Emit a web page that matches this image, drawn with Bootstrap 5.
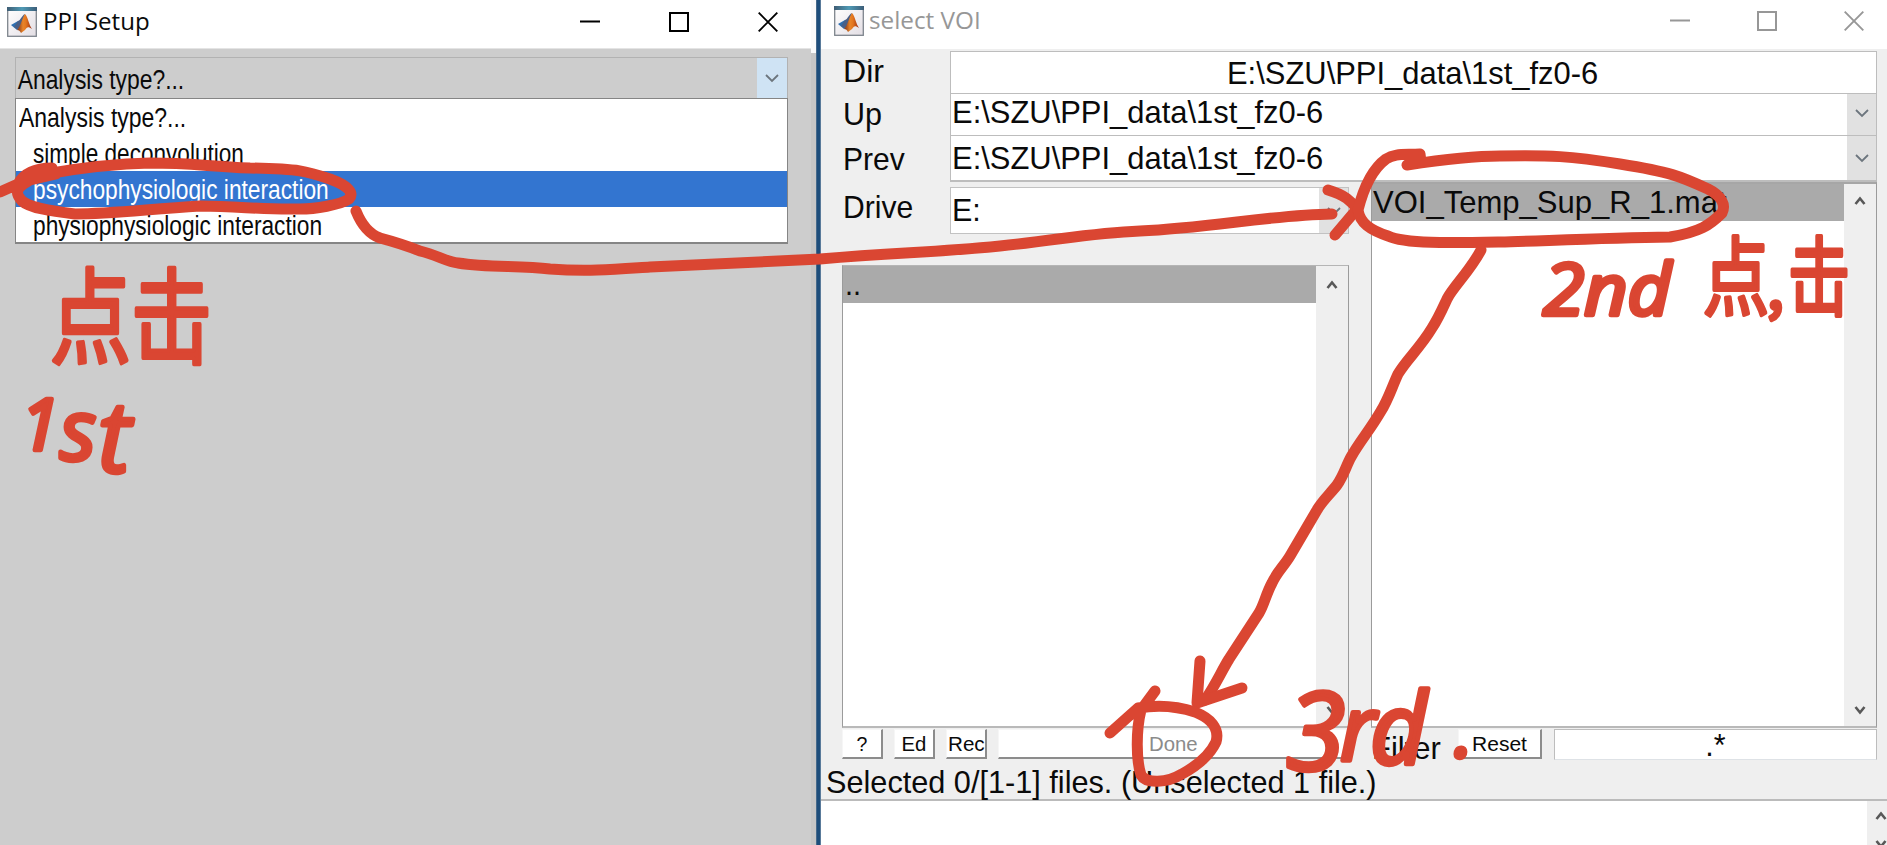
<!DOCTYPE html>
<html lang="en">
<head>
<meta charset="utf-8">
<title>PPI Setup</title>
<link href="https://cdn.jsdelivr.net/npm/bootstrap@5.3.0/dist/css/bootstrap.min.css" rel="stylesheet">
<style>
  body { width: 1887px; height: 845px; overflow: hidden; background: #cdcdcd; color: #0a0a0a; font-family: "Liberation Sans", Arial, sans-serif; }
  .fit { display: inline-block; transform-origin: 0 50%; white-space: pre; }
  .titlebar { height: 49px; background: #fff; font-family: "Open Sans", "Noto Sans", sans-serif; font-size: 24.5px; }
  .titlebar .fit { line-height: 41px; }
  .win-a { width: 811px; background: #cdcdcd; }
  .win-a .titlebar { border-bottom: 1px solid #e4e4e4; }
  .gutter { width: 5px; background: #c6c6c6; border-top: 53px solid #fafafa; }
  .frame-edge { width: 5px; background: linear-gradient(90deg, #5b7893, #1d4d7b 30%, #1d4d7b 70%, #7891aa); }
  .win-b { width: 1066px; background: #efefef; }
  .win-b .titlebar { color: #979797; }
  .ppi { margin: 8px 0 0 15px; width: 773px; font-size: 27.5px; }
  .ppi-combo { height: 41px; border: 1px solid #b2b2b2; border-bottom: 0; line-height: 43px; }
  .ppi-btn { width: 30px; background: #cfe3f4; }
  .ppi-menu { height: 146px; background: #fff; border: 1px solid #858585; border-width: 1.5px 1px 2px; }
  .ppi-item { height: 36px; line-height: 37px; padding-left: 17px; }
  .ppi-item.first { padding-left: 3px; }
  .ppi-item.on { background: #3375d0; color: #fff; }
  .big { font-size: 30.5px; }
  .lab { width: 129px; padding-left: 22px; }
  .fieldbox { background: #fff; border: 1px solid #bdbdbd; border-bottom: 0; }
  .r1 { height: 42px; line-height: 42px; margin-top: 2px; }
  .r2 { height: 42px; line-height: 37px; }
  .r3 { height: 47px; line-height: 44px; }
  .r3 .fieldbox { border-bottom: 2px solid #bdbdbd; }
  .r4 { height: 47px; line-height: 45px; margin-top: 5px; }
  .r4 .fieldbox { width: 399px; border: 1.5px solid #c2c2c2; }
  .dd { width: 29px; background: #e1e1e1; }
  .col-l { width: 528px; }
  .listbox { background: #fff; border: 1.5px solid #9b9b9b; border-top-color: #b5b5b5; border-bottom: 2px solid #b9b9b9; }
  .list-l { width: 507px; height: 463px; margin: 31px 0 0 21px; }
  .list-r { width: 506px; height: 546px; margin-left: 22px; border-top: 2px solid #a6a6a6; }
  .pick { height: 37px; background: #aaa; line-height: 37px; }
  .sb { width: 32px; background: #efefef; padding: 13px 0 10px; }
  .pb { height: 30px; background: #fff; border: 1px solid #f6f6f6; border-right: 2px solid #8c8c8c; border-bottom: 2px solid #8c8c8c; font-size: 19.5px; line-height: 29px; text-align: center; }
  .pb .fit { transform-origin: 50% 50%; }
  .btns { height: 32px; padding-top: 1px; }
  .status { height: 39px; line-height: 45px; padding-left: 5px; }
  .msgs { height: 46px; background: #fff; border-top: 2px solid #bbb; }
  .msgs .sb { width: 20px; padding: 9px 0 0 8px; overflow: hidden; }
  .ink { left: 0; top: 0; pointer-events: none; }
  .ink g { fill: none; stroke: #da4632; stroke-width: 11; stroke-linecap: round; stroke-linejoin: round; }
  .ink text { fill: #da4632; stroke: #da4632; stroke-width: 4; stroke-linejoin: round; font-family: "Noto Sans CJK SC", sans-serif; }
  .ink .lat { font-family: "Open Sans", "Liberation Sans", sans-serif; font-style: italic; stroke-width: 4.5; }
</style>
</head>
<body class="position-relative">
<svg width="0" height="0" class="position-absolute">
  <defs>
    <linearGradient id="sky" x1="0" x2="1"><stop offset="0" stop-color="#3f5d74"/><stop offset=".5" stop-color="#4f9ab5"/><stop offset="1" stop-color="#3c5d78"/></linearGradient>
    <linearGradient id="face" x1="0" y1="0" x2="1" y2="1"><stop offset="0" stop-color="#fff"/><stop offset="1" stop-color="#e3dee4"/></linearGradient>
    <linearGradient id="peak" x1="0" x2="1"><stop offset="0" stop-color="#7a2d17"/><stop offset=".4" stop-color="#e8852a"/><stop offset=".6" stop-color="#e3761f"/><stop offset="1" stop-color="#9c2c12"/></linearGradient>
    <symbol id="matlab" viewBox="0 0 30 30">
      <rect x=".7" y=".7" width="28.6" height="28.6" fill="url(#face)" stroke="#7e858d" stroke-width="1.3"/>
      <rect x="0" y="0" width="30" height="4" fill="url(#sky)"/>
      <path d="M4 18l7-4 5 3-6 6z" fill="#2f6fb0"/>
      <path d="M11 14c3-1 4-6 7-7l-4 13-4 2-3-2z" fill="#4a5f86"/>
      <path d="M18 7c3 3 4 11 7 15-4-3-5-2-7 1l-4 3c-1-2-2-3-4-3 4-4 5-12 8-16z" fill="url(#peak)"/>
    </symbol>
    <symbol id="down" viewBox="0 0 14 14"><path d="M1 4l6 6 6-6" fill="none" stroke="currentColor" stroke-width="1.8"/></symbol>
    <symbol id="sup" viewBox="0 0 12 12"><path d="M1.5 9L6 3.5 10.500 9" fill="none" stroke="#585858" stroke-width="2.6"/></symbol>
    <symbol id="sdn" viewBox="0 0 12 12"><path d="M1.500 3L6 8.500 10.500 3" fill="none" stroke="#585858" stroke-width="2.600"/></symbol>
    <symbol id="wmin" viewBox="0 0 20 20"><path d="M0 9.500h20" stroke="currentColor" stroke-width="2"/></symbol>
    <symbol id="wmax" viewBox="0 0 20 20"><rect x="1" y="1" width="18" height="18" fill="none" stroke="currentColor" stroke-width="2"/></symbol>
    <symbol id="wcls" viewBox="0 0 20 20"><path d="M.7 .7l18.600 18.600M19.300 .7L.7 19.300" stroke="currentColor" stroke-width="1.900"/></symbol>
  </defs>
</svg>

<div class="d-flex h-100">
  <section class="win-a flex-shrink-0">
    <header class="titlebar d-flex align-items-start" style="padding-left:7px">
      <svg width="30" height="30" style="margin-top:7px"><use href="#matlab"/></svg>
      <span class="fit" style="padding-left:6px" data-w="113">PPI Setup</span>
      <div class="d-flex ms-auto" style="margin-top:12px;gap:69px;padding-right:33px;color:#000">
        <svg width="20" height="20"><use href="#wmin"/></svg>
        <svg width="20" height="20"><use href="#wmax"/></svg>
        <svg width="20" height="20"><use href="#wcls"/></svg>
      </div>
    </header>
    <div class="ppi">
      <div class="ppi-combo d-flex">
        <span class="fit flex-shrink-0 ms-0" style="padding-left:2px" data-w="168">Analysis type?...</span>
        <div class="ppi-btn ms-auto d-flex align-items-center justify-content-center text-secondary"><svg width="14" height="14"><use href="#down"/></svg></div>
      </div>
      <div class="ppi-menu">
        <div class="ppi-item first"><span class="fit" data-w="167">Analysis type?...</span></div>
        <div class="ppi-item"><span class="fit" data-w="211">simple deconvolution</span></div>
        <div class="ppi-item on"><span class="fit" data-w="296">psychophysiologic interaction</span></div>
        <div class="ppi-item"><span class="fit" data-w="289">physiophysiologic interaction</span></div>
      </div>
    </div>
  </section>
  <div class="gutter flex-shrink-0"></div>
  <div class="frame-edge flex-shrink-0"></div>

  <section class="win-b flex-shrink-0 big">
    <header class="titlebar d-flex align-items-start" style="padding-left:13px">
      <svg width="30" height="30" style="margin-top:6px"><use href="#matlab"/></svg>
      <span class="fit" style="padding-left:5px;line-height:39px" data-w="117">select VOI</span>
      <div class="d-flex ms-auto" style="margin-top:11px;gap:67px;padding-right:23px">
        <svg width="20" height="20"><use href="#wmin"/></svg>
        <svg width="20" height="20"><use href="#wmax"/></svg>
        <svg width="20" height="20"><use href="#wcls"/></svg>
      </div>
    </header>
    <div class="d-flex r1"><div class="lab" style="line-height:40px"><span class="fit" data-w="41">Dir</span></div>
      <div class="fieldbox d-flex" style="width:927px;padding-left:276px"><span class="fit" data-w="371">E:\SZU\PPI_data\1st_fz0-6</span></div></div>
    <div class="d-flex r2"><div class="lab" style="line-height:43px"><span class="fit" data-w="39">Up</span></div>
      <div class="fieldbox d-flex" style="width:927px"><span class="fit" data-w="372" style="padding-left:1px">E:\SZU\PPI_data\1st_fz0-6</span>
        <div class="dd ms-auto d-flex align-items-center justify-content-center text-secondary"><svg width="14" height="14" style="margin-top:-4px"><use href="#down"/></svg></div></div></div>
    <div class="d-flex r3"><div class="lab" style="line-height:49px"><span class="fit" data-w="62">Prev</span></div>
      <div class="fieldbox d-flex" style="width:927px"><span class="fit" data-w="372" style="padding-left:1px">E:\SZU\PPI_data\1st_fz0-6</span>
        <div class="dd ms-auto d-flex align-items-center justify-content-center text-secondary"><svg width="14" height="14"><use href="#down"/></svg></div></div></div>
    <div class="d-flex">
      <div class="col-l flex-shrink-0">
        <div class="d-flex r4"><div class="lab flex-shrink-0" style="line-height:40px"><span class="fit" data-w="70">Drive</span></div>
          <div class="fieldbox d-flex flex-shrink-0"><span class="fit" data-w="30" style="padding-left:1px">E:</span>
            <div class="dd ms-auto d-flex align-items-center justify-content-center text-secondary"><svg width="14" height="14"><use href="#down"/></svg></div></div></div>
        <div class="listbox list-l d-flex">
          <div class="flex-grow-1"><div class="pick"><span class="fit" data-w="18" style="padding-left:2px">..</span></div></div>
          <div class="sb d-flex flex-column align-items-center justify-content-between"><svg width="12" height="12"><use href="#sup"/></svg><svg width="12" height="12"><use href="#sdn"/></svg></div>
        </div>
        <div class="btns d-flex" style="padding-left:21px;gap:11px">
          <div class="pb flex-shrink-0" style="width:41px">?</div>
          <div class="pb flex-shrink-0" style="width:41px"><span class="fit" data-w="25">Ed</span></div>
          <div class="pb flex-shrink-0" style="width:41px"><span class="fit" data-w="37">Rec</span></div>
          <div class="pb flex-shrink-0" style="width:351px;color:#8b8b8b"><span class="fit" data-w="49">Done</span></div>
        </div>
      </div>
      <div class="flex-shrink-0">
        <div class="listbox list-r d-flex">
          <div class="flex-grow-1"><div class="pick"><span class="fit" data-w="355" style="padding-left:1px">VOI_Temp_Sup_R_1.mat</span></div></div>
          <div class="sb d-flex flex-column align-items-center justify-content-between" style="padding-top:11px"><svg width="12" height="12"><use href="#sup"/></svg><svg width="12" height="12"><use href="#sdn"/></svg></div>
        </div>
        <div class="btns d-flex" style="padding-left:23px">
          <div class="flex-shrink-0" style="width:86px;line-height:39px"><span class="fit" data-w="69">Filter</span></div>
          <div class="pb flex-shrink-0" style="width:84px"><span class="fit" data-w="55">Reset</span></div>
          <div class="fieldbox flex-shrink-0 text-center border-bottom" style="width:323px;height:31px;margin-left:12px;line-height:31px">.*</div>
        </div>
      </div>
    </div>
    <div class="status"><span class="fit" data-w="551">Selected 0/[1-1] files. (Unselected 1 file.)</span></div>
    <div class="msgs d-flex justify-content-end"><div class="sb"><svg width="12" height="50" viewBox="0 0 12 50" class="d-block"><path d="M1.500 9L6 3.500 10.500 9M1.500 31L6 36.500 10.500 31" fill="none" stroke="#585858" stroke-width="2.600"/></svg></div></div>
  </section>
</div>

<!-- Red pen annotations drawn over both windows -->
<svg class="ink position-absolute" width="1887" height="845" viewBox="0 0 1887 845">
  <g>
    <path d="M0 192L18 184C23 175 32 168 52 168L52 173C75 169 110 164 150 163C190 163 205 166 250 168C300 169 306 171 330 179C349 186 354 193 349 199C340 205 315 209 300 209C260 210 240 206 200 206C140 210 110 214 75 214C50 211 30 208 22 201C13 191 18 187 30 180L56 174"/>
    <path d="M356 211C362 226 369 234 380 238C395 242 405 245 420 251C437 255 447 262 458 263C490 268 520 265 550 269C590 272 620 269 650 267L820 259C900 252 930 253 1000 246C1060 240 1090 233 1140 231C1210 228 1270 215 1332 214"/>
    <path d="M1328 190C1345 195 1351 201 1357 209L1335 235"/>
    <path d="M1407 165C1440 160 1470 156 1500 156C1550 155 1570 156 1620 164C1670 172 1680 176 1708 189C1722 196 1726 205 1722 213C1710 225 1700 232 1670 237C1600 238 1540 241 1500 242C1450 243 1405 244 1388 236C1370 230 1360 223 1358 210C1363 190 1371 170 1386 159C1395 153 1405 155 1420 154L1421 162"/>
    <path d="M1481 250C1470 271 1453 287 1447 299C1441 312 1438 319 1432 328C1420 348 1407 359 1398 374C1392 387 1388 400 1381 411C1370 430 1360 441 1351 457C1346 466 1344 475 1337 485C1330 494 1322 501 1317 510L1290 556C1284 566 1277 572 1272 583C1266 594 1264 605 1259 613L1229 659C1221 672 1215 686 1205 700"/>
    <path d="M1200 661L1197 703L1242 688"/>
    <path d="M1110 733L1138 708C1162 704 1180 707 1195 712C1210 718 1220 728 1216 742C1209 757 1193 768 1182 774C1167 783 1146 784 1141 775C1136 760 1136 730 1141 710L1155 691"/>
  </g>
  <text x="50" y="356" font-size="104" textLength="162" lengthAdjust="spacingAndGlyphs">点击</text>
  <text class="lat"><tspan x="20" y="450" font-size="72">1</tspan><tspan x="60" y="460" font-size="84">s</tspan><tspan x="98" y="472" font-size="98">t</tspan></text>
  <text class="lat" x="1543" y="315" font-size="72" textLength="128" lengthAdjust="spacingAndGlyphs">2nd</text>
  <text x="1703" y="309" font-size="86" textLength="66" lengthAdjust="spacingAndGlyphs">点</text>
  <text x="1767" y="309" font-size="60">,</text>
  <text x="1788" y="309" font-size="86" textLength="62" lengthAdjust="spacingAndGlyphs">击</text>
  <text class="lat"><tspan x="1286" y="770" font-size="108">3</tspan><tspan x="1340" y="760" font-size="90">r</tspan><tspan x="1370" y="764" font-size="98">d</tspan><tspan x="1454" y="757" font-size="80">.</tspan></text>
</svg>

<script src="https://cdn.jsdelivr.net/npm/bootstrap@5.3.0/dist/js/bootstrap.bundle.min.js"></script>
<script>
  // Scale each label horizontally to its control's text width
  document.querySelectorAll('.fit').forEach(function (el) {
    el.style.transform = 'scaleX(' + (el.dataset.w / el.offsetWidth) + ')';
  });
</script>
</body>
</html>
